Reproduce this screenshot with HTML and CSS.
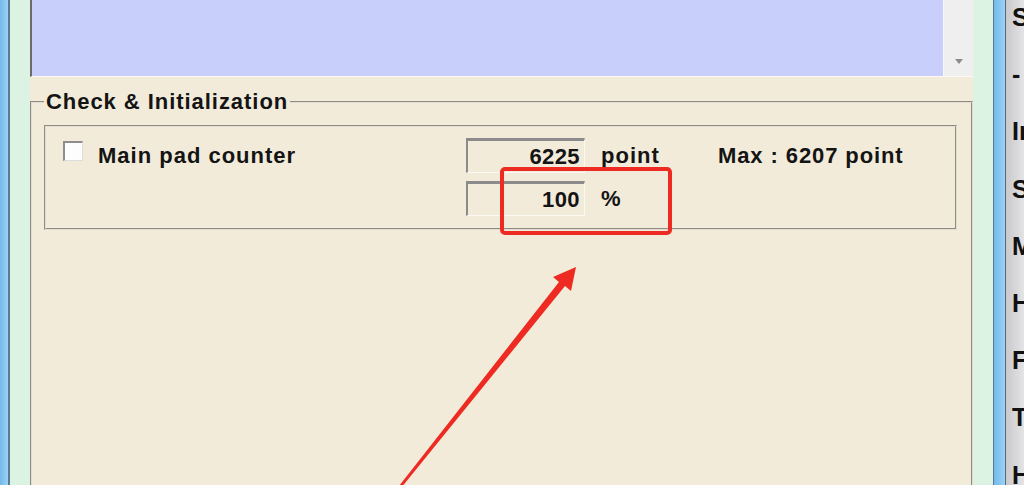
FILE: index.html
```html
<!DOCTYPE html>
<html lang="en">
<head>
  <meta charset="UTF-8" />
  <title>Check &amp; Initialization</title>
  <link rel="stylesheet" href="styles.css">
</head>
<body>
  <div class="frame-edge left"></div>
  <div class="frame-pad"></div>

  <div class="dialog">
    <div class="listbox">
      <div class="list-items"></div>
      <div class="scrollbar"><span class="scroll-arrow"></span></div>
    </div>

    <div class="panel">
      <fieldset class="group">
        <legend>Check &amp; Initialization</legend>
        <div class="counter-box">
          <div class="row">
            <label class="check-label"><span class="checkbox"></span>Main pad counter</label>
            <div class="field">6225</div>
            <span class="unit">point</span>
            <span class="max">Max : 6207 point</span>
          </div>
          <div class="row second">
            <span class="check-label"></span>
            <div class="field">100</div>
            <span class="unit">%</span>
          </div>
        </div>
      </fieldset>
    </div>
  </div>

  <div class="frame-pad"></div>
  <div class="frame-edge right"></div>

  <div class="side-list">
    <div>S</div>
    <div>-</div>
    <div>In</div>
    <div>S</div>
    <div>M</div>
    <div>H</div>
    <div>F</div>
    <div>T</div>
    <div>H</div>
  </div>

  <!-- annotation on top of the screenshot -->
  <div class="highlight"></div>
  <svg class="arrow" width="1024" height="485" viewBox="0 0 1024 485">
    <polygon points="399,486 559,282 553,277 576,267 571,291 565,286 401,488" fill="#ee2b22" />
  </svg>
</body>
</html>
```

FILE: styles.css
```css
body {
  margin: 0;
  height: 485px;
  display: flex;
  overflow: hidden;
  position: relative;
  background: #dcf2e2;
  font-family: "Liberation Sans", Arial, sans-serif;
  font-weight: bold;
  color: #141414;
}

.frame-edge {
  background: linear-gradient(to right, #74b9ea, #9ad3f6);
}

.frame-edge.left {
  width: 8px;
  border-right: 2px solid #587a96;
}

.frame-edge.right {
  width: 11px;
  border-left: 1px solid #587a96;
  border-right: 1px solid #5a6a78;
}

.frame-pad {
  width: 20px;
  flex-shrink: 0;
}

.dialog {
  width: 943px;
  flex-shrink: 0;
  display: flex;
  flex-direction: column;
  overflow: hidden;
}

.listbox {
  height: 77px;
  flex-shrink: 0;
  box-sizing: border-box;
  display: flex;
  border-left: 2px solid #6b6b6b;
  border-bottom: 1px solid #fbfaf4;
}

.list-items {
  flex: 1;
  background: #c8cffb;
}

.scrollbar {
  width: 30px;
  background: #efefef;
  border-left: 1px solid #f8f8f8;
  display: flex;
  align-items: flex-end;
  justify-content: center;
  padding-bottom: 12px;
  box-sizing: border-box;
}

.scroll-arrow {
  border-left: 4px solid transparent;
  border-right: 4px solid transparent;
  border-top: 5px solid #8c8c8c;
}

.panel {
  flex: 1;
  min-height: 0;
  background: #f2ebda;
  padding-top: 13px;
}

.group {
  margin: 0;
  padding: 0 14px 0 12px;
  min-height: 420px;
  border: 2px groove #e2ddd0;
}

.group legend {
  font-size: 22px;
  line-height: 24px;
  letter-spacing: 0.95px;
  padding: 0 2px;
}

.counter-box {
  margin-top: 11px;
  height: 105px;
  box-sizing: border-box;
  padding: 11px 0 0 17px;
  border: 2px groove #e2ddd0;
}

.row {
  display: flex;
  align-items: center;
  height: 35px;
  font-size: 22px;
  letter-spacing: 1px;
}

.row.second {
  margin-top: 8px;
}

.check-label {
  width: 403px;
  flex-shrink: 0;
  display: flex;
  align-items: center;
  gap: 15px;
}

.checkbox {
  width: 20px;
  height: 20px;
  box-sizing: border-box;
  margin-bottom: 9px;
  background: #fdfdfd;
  border-top: 2px solid #8e8e8e;
  border-left: 2px solid #8e8e8e;
  border-right: 1px solid #dcdcdc;
  border-bottom: 1px solid #dcdcdc;
}

.field {
  width: 119px;
  height: 35px;
  box-sizing: border-box;
  padding-right: 4px;
  text-align: right;
  line-height: 31px;
  letter-spacing: 0.4px;
  border-top: 3px solid #8b8b8b;
  border-left: 2px solid #8b8b8b;
  border-right: 1px solid #fbf9f2;
  border-bottom: 1px solid #fbf9f2;
}

.unit {
  width: 117px;
  margin-left: 16px;
}

.max {
  letter-spacing: 0.9px;
}

.side-list {
  width: 18px;
  padding-left: 6px;
  box-sizing: border-box;
  overflow: hidden;
  background: linear-gradient(to right, #c9c9cd, #e4e4e6);
  font-size: 25px;
  color: #111;
}

.side-list div {
  height: 57.2px;
  line-height: 57.2px;
}

.side-list div:first-child {
  margin-top: -11px;
}

.highlight {
  position: absolute;
  left: 500px;
  top: 167px;
  width: 172px;
  height: 68px;
  box-sizing: border-box;
  border: 4px solid #ee2b22;
  border-radius: 5px;
}

.arrow {
  position: absolute;
  left: 0;
  top: 0;
  pointer-events: none;
}
```
